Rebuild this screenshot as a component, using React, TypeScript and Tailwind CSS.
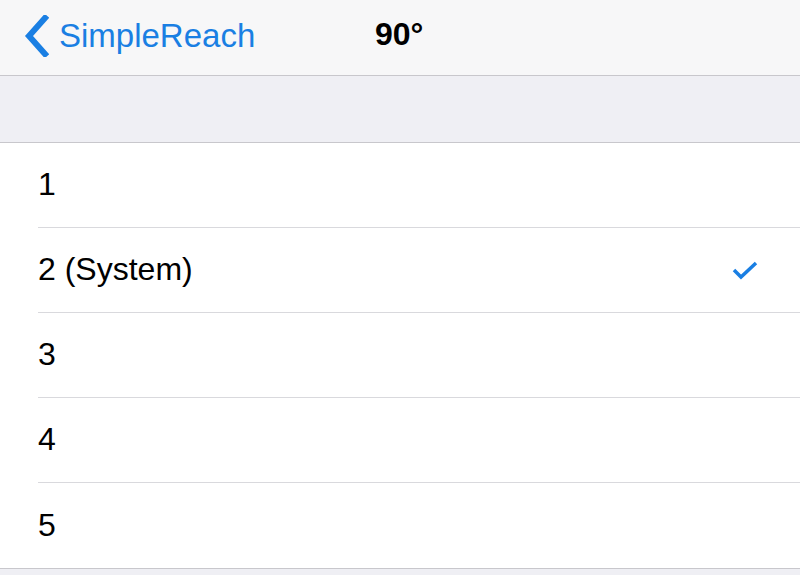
export default function App() {
  const rows = ["1", "2 (System)", "3", "4", "5"];
  const selected = 1;
  return (
    <div className="w-[800px] h-[575px] overflow-hidden bg-[#efeff4] font-['Helvetica','Liberation_Sans',sans-serif]">
      {/* Nav bar */}
      <div className="h-[76px] bg-[#f7f7f8] border-b border-[#c8c7cc] flex items-center relative">
        <div className="flex items-center pl-[23px] text-[#1a7fe3]">
          <svg width="26" height="42" viewBox="0 0 26 42" className="mb-[4px]">
            <path d="M22 3 L6 21 L22 39" fill="none" stroke="#1a7fe3" strokeWidth="6" strokeLinecap="square" />
          </svg>
          <span className="ml-[10px] text-[33px] leading-none pb-[4px]">SimpleReach</span>
        </div>
        <div className="absolute left-[375px] top-[18px] text-[32px] font-bold text-black leading-none">90°</div>
      </div>
      {/* Gap */}
      <div className="h-[67px] border-b border-[#c8c7cc]" />
      {/* List */}
      <div className="bg-white border-b border-[#c8c7cc]">
        {rows.map((r, i) => (
          <div key={r} className="pl-[38px]">
            <div className={`h-[85px] flex items-center pr-[42px] ${i < rows.length - 1 ? "border-b border-[#d9d9dd]" : ""}`}>
              <span className="text-[32px] text-black leading-none pb-[2px]">{r}</span>
              {i === selected && (
                <svg width="26" height="20" viewBox="0 0 26 20" className="ml-auto">
                  <path d="M2 10 L9 17 L24 3" fill="none" stroke="#1a7fe3" strokeWidth="3.5" />
                </svg>
              )}
            </div>
          </div>
        ))}
      </div>
    </div>
  );
}
